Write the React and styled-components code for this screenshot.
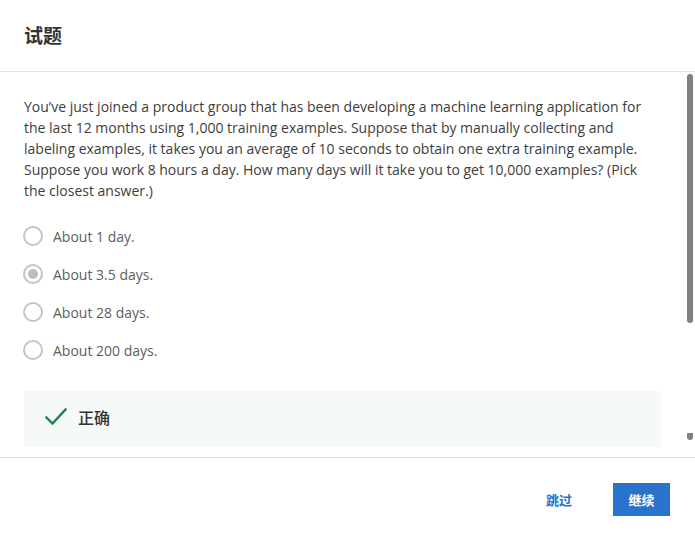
import React from "react";
import styled, { createGlobalStyle } from "styled-components";

const Global = createGlobalStyle`
  html, body { margin: 0; padding: 0; background: #fff; }
  * { box-sizing: border-box; }
`;

const Page = styled.div`
  width: 695px;
  height: 541px;
  display: flex;
  flex-direction: column;
  background: #fff;
  font-family: "Open Sans", "Noto Sans CJK SC", sans-serif;
  overflow: hidden;
`;

const Header = styled.header`
  height: 72px;
  flex: none;
  display: flex;
  align-items: center;
  padding: 0 24px 2px;
  border-bottom: 1px solid #e1e1e1;
`;

const Title = styled.h1`
  margin: 0;
  font-family: "Noto Sans CJK SC", sans-serif;
  font-size: 19px;
  font-weight: 700;
  color: #333;
`;

const Body = styled.div`
  position: relative;
  flex: 1;
  overflow: hidden;
  border-bottom: 1px solid #e1e1e1;
`;

const Content = styled.div`
  padding: 24px 34px 0 24px;
  display: flex;
  flex-direction: column;
`;

const Question = styled.p`
  margin: 0;
  font-size: 14px;
  line-height: 21px;
  color: #3d3d3d;
`;

const Options = styled.div`
  margin-top: 25px;
  display: flex;
  flex-direction: column;
  gap: 18px;
`;

const Option = styled.label`
  display: flex;
  align-items: center;
  gap: 10px;
  height: 20px;
  font-size: 14px;
  color: #5e5e5e;
`;

const Radio = styled.span`
  width: 20px;
  height: 20px;
  margin-left: -1px;
  border-radius: 50%;
  border: 2px solid #c4c4c4;
  display: flex;
  align-items: center;
  justify-content: center;
  flex: none;
  &::after {
    content: "";
    width: 10px;
    height: 10px;
    border-radius: 50%;
    background: ${(p) => (p.$checked ? "#bdbdbd" : "transparent")};
  }
`;

const Feedback = styled.div`
  margin-top: 31px;
  height: 56px;
  background: #f5f9f8;
  display: flex;
  align-items: center;
  padding: 0 0 4px 21px;
  gap: 11px;
`;

const FeedbackText = styled.span`
  font-family: "Noto Sans CJK SC", sans-serif;
  font-size: 16px;
  line-height: 1;
  color: #333;
  font-weight: 500;
`;

const ScrollThumb = styled.div`
  position: absolute;
  right: 2px;
  top: ${(p) => p.$top}px;
  width: 6px;
  height: ${(p) => p.$h}px;
  background: #808080;
  border-radius: ${(p) => p.$radius};
`;

const Footer = styled.footer`
  flex: none;
  height: 83px;
  display: flex;
  align-items: center;
  justify-content: flex-end;
  padding: 0 25px 0 0;
  gap: 41px;
`;

const TextButton = styled.button`
  border: none;
  background: none;
  padding: 0;
  font-family: "Noto Sans CJK SC", sans-serif;
  font-size: 13px;
  font-weight: 700;
  color: #2a73cc;
  cursor: pointer;
`;

const PrimaryButton = styled.button`
  border: none;
  width: 57px;
  height: 33px;
  background: #2a73cc;
  color: #fff;
  font-family: "Noto Sans CJK SC", sans-serif;
  font-size: 13px;
  font-weight: 700;
  cursor: pointer;
`;

const CheckIcon = () => (
  <svg width="22" height="18" viewBox="0 0 22 18" fill="none">
    <path d="M1.5 9.5 L7.5 15.5 L20.5 1.5" stroke="#1f8354" strokeWidth="2.4" strokeLinecap="square" />
  </svg>
);

const options = ["About 1 day.", "About 3.5 days.", "About 28 days.", "About 200 days."];

export default function App() {
  return (
    <Page>
      <Global />
      <Header>
        <Title>试题</Title>
      </Header>
      <Body>
        <Content>
          <Question>
            You’ve just joined a product group that has been developing a machine learning application for the last
            12 months using 1,000 training examples. Suppose that by manually collecting and labeling examples, it
            takes you an average of 10 seconds to obtain one extra training example. Suppose you work 8 hours a day.
            How many days will it take you to get 10,000 examples? (Pick the closest answer.)
          </Question>
          <Options>
            {options.map((o, i) => (
              <Option key={o}>
                <Radio $checked={i === 1} />
                {o}
              </Option>
            ))}
          </Options>
          <Feedback>
            <CheckIcon />
            <FeedbackText>正确</FeedbackText>
          </Feedback>
        </Content>
        <ScrollThumb $top={2} $h={249} $radius="3px" />
        <ScrollThumb $top={361} $h={7} $radius="0 0 3px 3px" />
      </Body>
      <Footer>
        <TextButton>跳过</TextButton>
        <PrimaryButton>继续</PrimaryButton>
      </Footer>
    </Page>
  );
}
